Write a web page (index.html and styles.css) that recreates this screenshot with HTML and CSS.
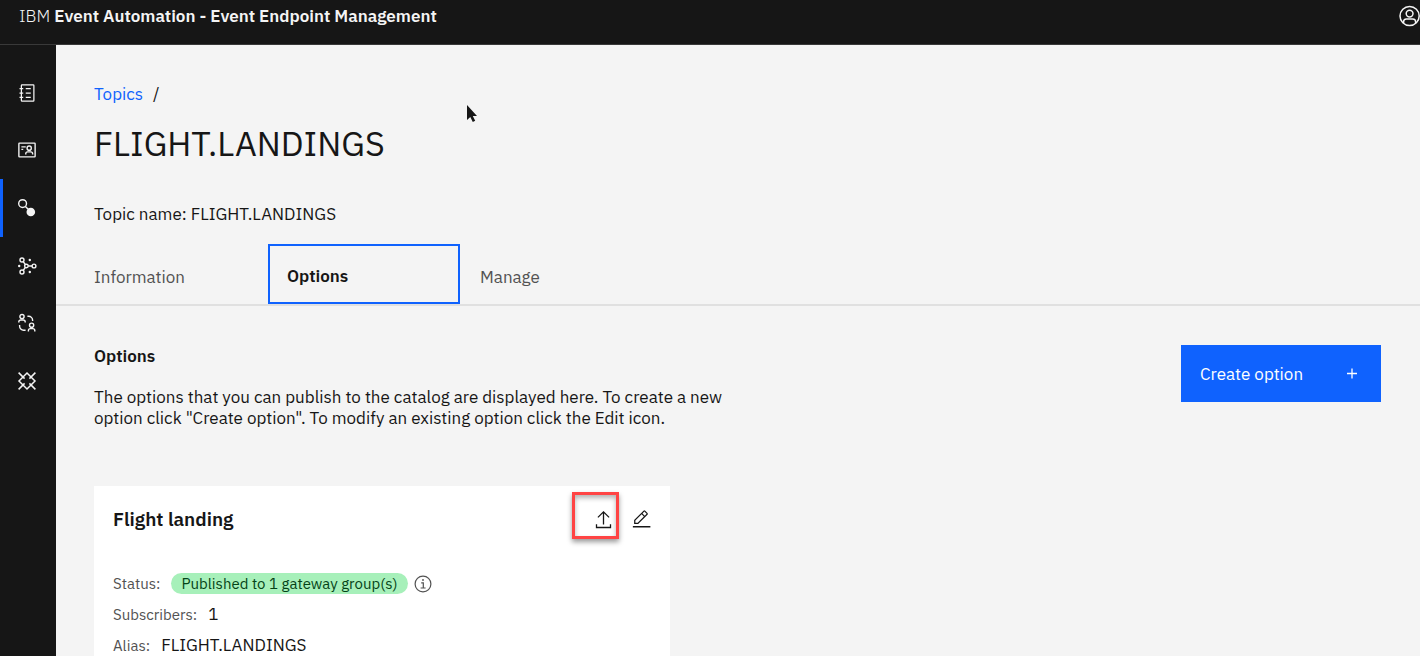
FILE: index.html
```html
<!DOCTYPE html>
<html lang="en">
<head>
<meta charset="utf-8">
<meta name="viewport" content="width=device-width, initial-scale=1">
<title>Event Endpoint Management</title>
<link rel="stylesheet" href="styles.css">
</head>
<body>
<header class="topbar">
  <div class="brand">IBM <strong>Event Automation - Event Endpoint Management</strong></div>
  <button class="icon-button profile" type="button" aria-label="User profile">
    <svg width="22" height="22" viewBox="0 0 22 22" fill="none" stroke="currentColor" stroke-width="1.5"><circle cx="11.600" cy="11" r="9.6"/><circle cx="11.600" cy="8.6" r="3.4"/><path d="M5.600 18v-1.2a2.8 2.8 0 0 1 2.8-2.8h6.4a2.8 2.8 0 0 1 2.8 2.8V18"/></svg>
  </button>
</header>
<div class="shell">
  <nav class="rail" aria-label="Main">
    <div class="rail-items">
      <a class="rail-link" href="#catalog" aria-label="Catalog">
        <svg width="20" height="20" viewBox="0 0 32 32" fill="currentColor"><path d="M26 2H8a2 2 0 0 0-2 2v4H4v2h2v5H4v2h2v5H4v2h2v4a2 2 0 0 0 2 2h18a2 2 0 0 0 2-2V4a2 2 0 0 0-2-2zm0 26H8v-4h2v-2H8v-5h2v-2H8v-5h2V8H8V4h18z"/><path d="M14 8h8v2h-8zM14 15h8v2h-8zM14 22h8v2h-8z"/></svg>
      </a>
      <a class="rail-link" href="#subscriptions" aria-label="Subscriptions">
        <svg width="20" height="20" viewBox="0 0 32 32" fill="none" stroke="currentColor" stroke-width="2.200"><rect x="3" y="5" width="26" height="22" rx="1"/><path d="M7 11h7M7 15h3M14 23v-1a3 3 0 0 1 3-3h5a3 3 0 0 1 3 3v1"/><circle cx="19.5" cy="13" r="3.4"/></svg>
      </a>
      <a class="rail-link rail-link-active" href="#topics" aria-label="Topics" aria-current="page">
        <svg width="20" height="20" viewBox="0 0 20 20" fill="none" stroke="currentColor" stroke-width="1.4"><circle cx="5.6" cy="5.6" r="3.9"/><path d="M8.4 8.4 12 12"/><circle cx="13.8" cy="14" r="4.3" fill="currentColor" stroke="none"/></svg>
      </a>
      <a class="rail-link" href="#clusters" aria-label="Clusters">
        <svg width="20" height="20" viewBox="0 0 20 20" fill="none" stroke="currentColor" stroke-width="1.4"><circle cx="5" cy="4" r="2"/><circle cx="5" cy="16" r="2"/><circle cx="9.4" cy="10" r="1.8"/><circle cx="17" cy="10" r="1.9"/><path d="m6.2 5.7 2.1 2.8M6.2 14.3l2.1-2.8M11.2 10h3.9"/><g fill="currentColor" stroke="none"><circle cx="2.2" cy="10" r="1.2"/><circle cx="12.8" cy="4" r="1.2"/><circle cx="12.8" cy="16" r="1.2"/></g></svg>
      </a>
      <a class="rail-link" href="#groups" aria-label="Gateway groups">
        <svg width="20" height="20" viewBox="0 0 20 20" fill="none" stroke="currentColor" stroke-width="1.4"><circle cx="5" cy="3.6" r="2.100"/><path d="M1.800 9.600V9a2 2 0 0 1 2-2h2.400a2 2 0 0 1 2 2v.6"/><circle cx="14.6" cy="12.200" r="2.100"/><path d="M11.4 18.400v-.8a2 2 0 0 1 2-2h2.400a2 2 0 0 1 2 2v.8M10.400 3.200h1.200a4 4 0 0 1 4 4v.8M2.600 12v1.200a4 4 0 0 0 4 4h2"/></svg>
      </a>
      <a class="rail-link" href="#gateways" aria-label="Gateways">
        <svg width="20" height="20" viewBox="0 0 20 20" fill="none" stroke="currentColor" stroke-width="1.5"><path d="m10 2 8 8-8 8-8-8zM1.600 1.600l6 6M18.400 1.600l-6 6M1.600 18.400l6-6M18.400 18.400l-6-6"/></svg>
      </a>
    </div>
  </nav>
  <main class="content">
    <nav class="breadcrumb" aria-label="Breadcrumb"><a href="#topics">Topics</a><span>/</span></nav>
    <h1 class="title">FLIGHT.LANDINGS</h1>
    <p class="topic-name">Topic name: FLIGHT.LANDINGS</p>
    <div class="tabs" role="tablist">
      <button class="tab" type="button" role="tab" aria-selected="false">Information</button>
      <button class="tab tab-selected" type="button" role="tab" aria-selected="true">Options</button>
      <button class="tab" type="button" role="tab" aria-selected="false">Manage</button>
    </div>
    <section class="panel">
      <div class="intro">
        <div class="intro-text">
          <h2 class="section-title">Options</h2>
          <p class="description">The options that you can publish to the catalog are displayed here. To create a new option click "Create option". To modify an existing option click the Edit icon.</p>
        </div>
        <button class="create" type="button">Create option
          <svg width="20" height="20" viewBox="0 0 20 20" fill="none" stroke="currentColor" stroke-width="1.3"><path d="M10 4.500v10M5 9.500h10"/></svg>
        </button>
      </div>
      <article class="card">
        <div class="card-head">
          <h3 class="card-title">Flight landing</h3>
          <div class="card-actions">
            <button class="icon-button publish" type="button" aria-label="Publish">
              <svg width="20" height="20" viewBox="0 0 20 20" fill="none" stroke="currentColor" stroke-width="1.3"><path d="M10.500 15.500V2.900M4.900 8.400l5.600-5.600 5.600 5.600M3.500 15.200v3.300h14v-3.300"/></svg>
              <span class="highlight"></span>
            </button>
            <button class="icon-button" type="button" aria-label="Edit">
              <svg width="20" height="20" viewBox="0 0 32 32" fill="currentColor"><path d="M3 27h28v2.400H3zM26.400 9a2 2 0 0 0 0-2.8l-3.6-3.6a2 2 0 0 0-2.8 0l-15 15V24h6.4zm-5-5L25 7.6l-3 3L18.400 7zM7 22v-3.600l10-10 3.600 3.600-10 10z"/></svg>
            </button>
          </div>
        </div>
        <dl class="facts">
          <div class="fact">
            <dt>Status:</dt>
            <dd class="status"><span class="tag">Published to 1 gateway group(s)</span>
              <button class="icon-button info" type="button" aria-label="Status details">
                <svg width="18" height="18" viewBox="0 0 18 18" fill="none" stroke="currentColor" stroke-width="1.2"><circle cx="9" cy="9" r="7.900"/><path d="M7.200 7.800H9.300v5M6.600 13h5"/><circle cx="9" cy="5" r=".9" fill="currentColor" stroke="none"/></svg>
              </button>
            </dd>
          </div>
          <div class="fact"><dt>Subscribers:</dt><dd>1</dd></div>
          <div class="fact"><dt>Alias:</dt><dd>FLIGHT.LANDINGS</dd></div>
        </dl>
      </article>
    </section>
  </main>
</div>
<svg class="pointer" width="12" height="18" viewBox="0 0 12 18" aria-hidden="true"><path d="M0 0v15l3.300-3 2.500 5 2.400-1.200-2.400-4.800H10z" fill="#161616"/></svg>
</body>
</html>
```
FILE: styles.css
```css
* { box-sizing: border-box; }

body {
  margin: 0;
  height: 100vh;
  overflow: hidden;
  display: flex;
  flex-direction: column;
  background: #f4f4f4;
  color: #161616;
  font-family: "IBM Plex Sans", Roboto, sans-serif;
  font-size: 17px;
  line-height: 21px;
}

h1, h2, h3, p, dl, dd { margin: 0; }
svg { display: block; flex: none; }
button { font: inherit; color: inherit; border: 0; margin: 0; cursor: pointer; }

.icon-button { background: none; padding: 0; }

.topbar {
  flex: none;
  display: flex;
  justify-content: space-between;
  align-items: center;
  padding: 5px 0 17px 19px;
  background: #161616;
  border-bottom: 1px solid #393939;
  color: #f4f4f4;
}
.brand { font-weight: 300; }
.brand strong { font-weight: 600; }

.shell { flex: 1; min-height: 0; display: flex; overflow: auto; }

.rail {
  flex: none;
  width: 56px;
  min-height: 100%;
  padding-top: 19px;
  background: #161616;
}
.rail-items {
  display: grid;
  grid-template-rows: repeat(6, 1fr);
  height: 346px;
}
.rail-link {
  display: flex;
  align-items: center;
  padding-left: 14px;
  border-left: 3px solid transparent;
  color: #f4f4f4;
}
.rail-link-active { border-left-color: #0f62fe; }

.shell { overflow: hidden; }
.content { flex: 1; min-width: 0; padding-top: 39px; overflow: auto; scrollbar-width: none; }

.breadcrumb { display: flex; gap: 10px; padding-left: 38px; }
.breadcrumb a { color: #0f62fe; text-decoration: none; }

.title {
  margin-top: 17px;
  padding-left: 38px;
  font-size: 34px;
  line-height: 42px;
  font-weight: 400;
}
.topic-name { margin-top: 40px; padding-left: 38px; }

.tabs {
  display: flex;
  gap: 1px;
  margin-top: 19px;
  padding-left: 19px;
  border-bottom: 2px solid #e0e0e0;
}
.tab {
  width: 192px;
  height: 60px;
  padding: 6px 19px 0;
  background: none;
  color: #525252;
  text-align: left;
}
.tab-selected {
  padding: 4px 17px 0;
  border: 2px solid #0f62fe;
  color: #161616;
  font-weight: 600;
}

.panel { padding: 39px 39px 0 38px; }
.intro { display: flex; justify-content: space-between; align-items: flex-start; gap: 40px; }
.intro-text { max-width: 660px; padding-top: 1px; }
.section-title { font-size: 17px; line-height: 21px; font-weight: 600; }
.description { margin-top: 20px; }

.create {
  flex: none;
  display: flex;
  justify-content: space-between;
  align-items: center;
  width: 200px;
  height: 57px;
  padding: 1px 19px 0;
  background: #0f62fe;
  color: #fff;
}

.card {
  max-width: 576px;
  margin-top: 57px;
  padding: 19px;
  background: #fff;
}
.card-head { display: flex; justify-content: space-between; align-items: center; height: 28px; }
.card-title { font-size: 19px; line-height: 28px; font-weight: 600; }
.card-actions { display: flex; gap: 18px; }

.publish { position: relative; }
.highlight {
  position: absolute;
  top: -17px;
  right: -6px;
  width: 47px;
  height: 47px;
  border: 3px solid #ff4444;
  box-shadow: 0 3px 5px rgba(0, 0, 0, .4), inset 0 3px 5px rgba(0, 0, 0, .3);
}

.facts { display: grid; gap: 10px; margin-top: 40px; }
.fact { display: flex; align-items: center; gap: 11px; height: 21px; }
.fact dt { color: #525252; font-size: 15px; }
.status { display: flex; align-items: center; gap: 6px; }
.tag {
  padding: 0 10px;
  border-radius: 11px;
  background: #a7f0ba;
  color: #044317;
  font-size: 15px;
}
.info { color: #525252; }

.pointer { position: absolute; left: 467px; top: 105px; }
```
